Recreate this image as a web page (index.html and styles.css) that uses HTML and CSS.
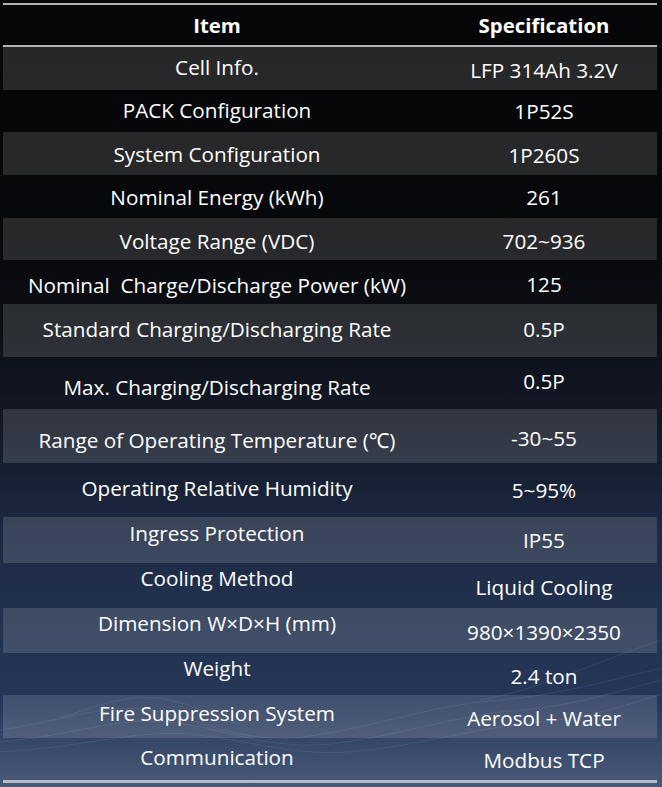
FILE: index.html
```html
<!DOCTYPE html>
<html lang="en">
<head>
<meta charset="utf-8">
<title>Specification</title>
<link rel="stylesheet" href="styles.css">
</head>
<body>
<div class="page">
  <svg class="waves" width="662" height="787" viewBox="0 0 662 787" aria-hidden="true">
    <defs>
      <linearGradient id="fade" x1="0" y1="0" x2="0" y2="1">
        <stop offset="0" stop-color="#8fa3c4" stop-opacity="0"/>
        <stop offset="1" stop-color="#8fa3c4" stop-opacity="0.28"/>
      </linearGradient>
    </defs>
    <rect x="0" y="700" width="662" height="87" fill="url(#fade)"/>
    <g fill="none" stroke="#a9b8d2" stroke-width="0.7" stroke-opacity="0.18">
      <path d="M0 730 C60 722 110 700 160 712 C210 724 250 745 310 736 C380 726 430 705 500 700 C560 695 610 680 662 668"/>
      <path d="M0 742 C70 736 120 716 170 722 C230 730 270 750 330 744 C400 736 450 716 520 710 C580 705 620 690 662 680"/>
      <path d="M0 752 C80 748 130 730 190 734 C250 740 290 756 350 752 C420 746 470 728 540 722 C590 718 630 704 662 694"/>
      <path d="M60 718 C100 705 130 692 170 700 C200 706 215 720 240 724"/>
      <path d="M480 700 C540 690 600 660 662 640"/>
    </g>
  </svg>
  <div class="sheet">
    <div class="rule top"></div>
    <div class="row head"><div class="cell">Item</div><div class="cell">Specification</div></div>
    <div class="rule"></div>
    <div class="row sh h43"><div class="cell u1">Cell Info.</div><div class="cell d1">LFP 314Ah 3.2V</div></div>
    <div class="row h42"><div class="cell u1">PACK Configuration</div><div class="cell">1P52S</div></div>
    <div class="row sh h43"><div class="cell">System Configuration</div><div class="cell d1">1P260S</div></div>
    <div class="row h43"><div class="cell">Nominal Energy (kWh)</div><div class="cell">261</div></div>
    <div class="row sh h42"><div class="cell d2">Voltage Range (VDC)</div><div class="cell d1">702~936</div></div>
    <div class="row h44"><div class="cell d3 pre">Nominal  Charge/Discharge Power (kW)</div><div class="cell d1">125</div></div>
    <div class="row sh h53"><div class="cell u1">Standard Charging/Discharging Rate</div><div class="cell u1">0.5P</div></div>
    <div class="row h52"><div class="cell d4">Max. Charging/Discharging Rate</div><div class="cell u2">0.5P</div></div>
    <div class="row sh h54"><div class="cell d4">Range of Operating Temperature (℃)</div><div class="cell d1">-30~55</div></div>
    <div class="row h54"><div class="cell u2">Operating Relative Humidity</div><div class="cell">5~95%</div></div>
    <div class="row sh h46"><div class="cell u7">Ingress Protection</div><div class="cell">IP55</div></div>
    <div class="row h45"><div class="cell u7">Cooling Method</div><div class="cell d1">Liquid Cooling</div></div>
    <div class="row sh h45"><div class="cell u7">Dimension W×D×H (mm)</div><div class="cell d1">980×1390×2350</div></div>
    <div class="row h42"><div class="cell u6">Weight</div><div class="cell d1">2.4 ton</div></div>
    <div class="row sh h43"><div class="cell u3">Fire Suppression System</div><div class="cell d1">Aerosol + Water</div></div>
    <div class="row h41"><div class="cell u1">Communication</div><div class="cell d1">Modbus TCP</div></div>
    <div class="rule bottom"></div>
  </div>
</div>
</body>
</html>
```
FILE: styles.css
```css
html, body {
  margin: 0;
  padding: 0;
}
body {
  width: 662px;
  height: 787px;
  overflow: hidden;
  font-family: "Open Sans", "Noto Sans", "Liberation Sans", sans-serif;
  color: #ffffff;
}
.page {
  position: relative;
  width: 662px;
  height: 787px;
  background: linear-gradient(to bottom,
    #060608 0%,
    #07080b 30%,
    #0c0f16 42%,
    #141b2a 56%,
    #1d2a44 68%,
    #223250 80%,
    #26375a 90%,
    #2c3d5c 100%);
}
.waves {
  position: absolute;
  left: 0;
  top: 0;
}
.sheet {
  position: relative;
  margin-left: 3px;
  padding-top: 3px;
  width: 654px;
  display: flex;
  flex-direction: column;
}
.rule {
  height: 2px;
  background: #b3b3b3;
}
.rule.bottom {
  height: 3px;
  margin-top: 1px;
  background: #b8bcc4;
}
.row {
  display: grid;
  grid-template-columns: 428px 226px;
}
.row.sh {
  background: rgba(255, 255, 255, 0.135);
}
.cell {
  display: flex;
  align-items: center;
  justify-content: center;
  font-size: 20.7px;
  line-height: 26px;
  white-space: nowrap;
  box-sizing: border-box;
}
.pre { white-space: pre; }
.head { height: 40px; }
.head .cell {
  font-weight: 700;
  font-size: 20.4px;
}
.h41 { height: 41px; }
.h42 { height: 42px; }
.h43 { height: 43px; }
.h44 { height: 44px; }
.h45 { height: 45px; }
.h46 { height: 46px; }
.h52 { height: 52px; }
.h53 { height: 53px; }
.h54 { height: 54px; }
.d1 { padding-top: 3px; }
.d2 { padding-top: 4px; }
.d3 { padding-top: 6px; }
.d4 { padding-top: 8px; }
.u1 { padding-bottom: 3px; }
.u2 { padding-bottom: 4px; }
.u3 { padding-bottom: 7px; }
.u6 { padding-bottom: 12px; }
.u7 { padding-bottom: 15px; }
```
